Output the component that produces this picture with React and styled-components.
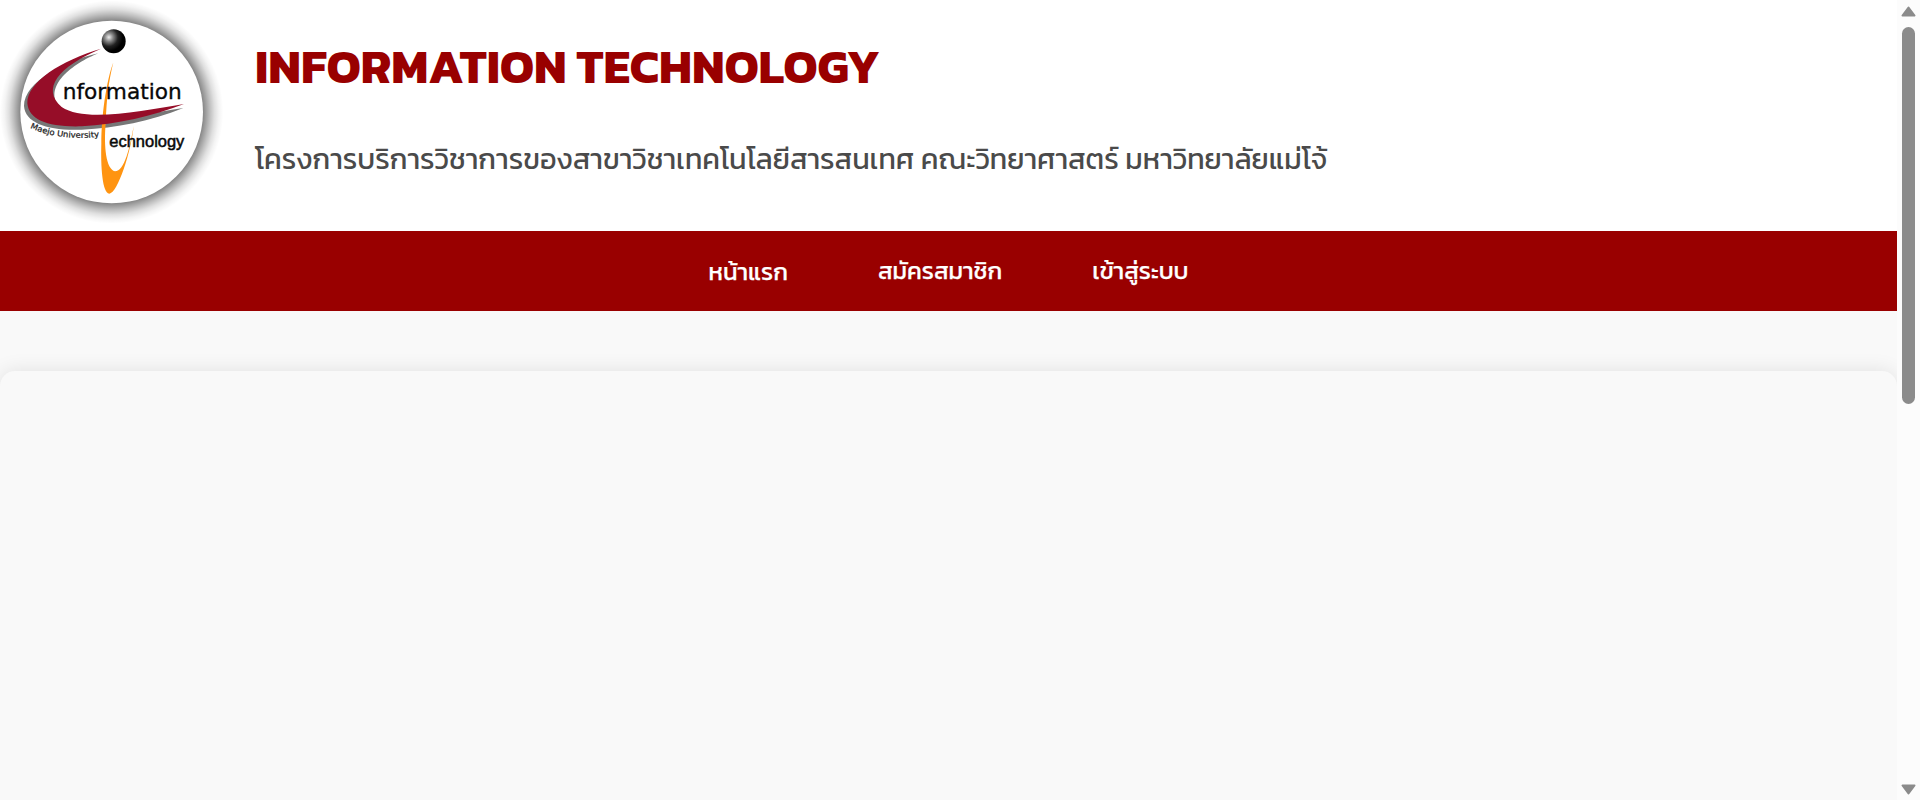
import React from "react";
import styled, { createGlobalStyle } from "styled-components";

const GlobalStyle = createGlobalStyle`
  * { box-sizing: border-box; }
  html, body { margin: 0; height: 800px; overflow: hidden; background: #fafafa; }
  body { font-family: Kanit, "Noto Sans Thai", "Noto Sans", "Liberation Sans", sans-serif; }
`;

const Window = styled.div`
  display: grid;
  grid-template-columns: 1fr 23px;
  height: 800px;
`;

const Page = styled.div`
  display: flex;
  flex-direction: column;
  min-width: 0;
  overflow: hidden;
  background: #f9f9f9;
`;

const Header = styled.header`
  display: flex;
  height: 231px;
  flex: none;
  background: #fff;
`;

const Logo = styled.svg`
  display: block;
  width: 230px;
  height: 231px;
  flex: none;
`;

const Heading = styled.div`
  padding: 35px 0 0 25px;
  white-space: nowrap;
`;

const Title = styled.h1`
  margin: 0;
  height: 62px;
  font: 700 48px/62px Kanit, Inter, sans-serif;
  color: #900;
`;

const Subtitle = styled.p`
  margin: 32px 0 0;
  height: 60px;
  font-size: 28.8px;
  line-height: 60px;
  color: #4a4a4a;
`;

const Nav = styled.nav`
  display: flex;
  justify-content: center;
  align-items: center;
  gap: 90px;
  height: 80px;
  flex: none;
  background: #900;
`;

const NavLink = styled.a`
  padding-top: ${(p) => (p.$current ? 2 : 0)}px;
  color: #fff;
  font-size: 24px;
  font-weight: 400;
  line-height: 40px;
  white-space: nowrap;
  -webkit-text-stroke: 0.25px #fff;
`;

const Content = styled.main`
  flex: 1;
  margin-top: 60px;
  border-radius: 15px 15px 0 0;
  background: #f9f9f9;
  box-shadow: 0 0 20px rgba(0, 0, 0, 0.1);
`;

const Scrollbar = styled.div`
  display: flex;
  flex-direction: column;
  align-items: center;
  justify-content: space-between;
  padding: 6px 0 5px;
  background: #fcfcfc;
`;

const ScrollTop = styled.div`
  display: flex;
  flex-direction: column;
  align-items: center;
  gap: 10px;
`;

const Arrow = styled.svg`
  display: block;
  width: 15px;
  height: 11px;
  transform: ${(p) => (p.$down ? "rotate(180deg)" : "none")};
`;

const Thumb = styled.div`
  width: 13px;
  height: 377px;
  border-radius: 7px;
  background: #8b8b8b;
`;

const ScrollArrow = ({ down }) => (
  <Arrow $down={down} viewBox="0 0 15 11">
    <path d="M7.5 1.5 L13.5 9.5 H1.5Z" fill="#8b8b8b" stroke="#8b8b8b" strokeWidth="2" strokeLinejoin="round" />
  </Arrow>
);

const Emblem = () => (
  <Logo viewBox="0 0 690 693">
    <defs>
      <radialGradient id="halo" gradientUnits="userSpaceOnUse" cx="335" cy="336" r="335">
        <stop offset=".81" stopColor="#000" stopOpacity=".5" />
        <stop offset=".84" stopColor="#000" stopOpacity=".39" />
        <stop offset=".88" stopColor="#000" stopOpacity=".25" />
        <stop offset=".92" stopColor="#000" stopOpacity=".125" />
        <stop offset=".96" stopColor="#000" stopOpacity=".045" />
        <stop offset="1" stopColor="#000" stopOpacity="0" />
      </radialGradient>
      <radialGradient id="ball" cx=".3" cy=".33" r=".58">
        <stop offset="0" stopColor="#eee" />
        <stop offset=".3" stopColor="#888" />
        <stop offset=".65" stopColor="#222" />
        <stop offset="1" stopColor="#000" />
      </radialGradient>
      <path id="arc" d="M90 384 Q180 424 302 410" />
    </defs>
    <circle cx="335" cy="336" r="335" fill="url(#halo)" />
    <circle cx="335" cy="336" r="274" fill="#fff" />
    <circle cx="341" cy="124" r="36" fill="url(#ball)" />
    <path d="M295 160 C200 180 72 245 72 318 C76 370 145 393 245 389 C350 384 450 364 550 324 C390 350 235 375 180 325 C125 260 220 190 295 160Z" fill="#777" />
    <path d="M340 187 C319 242 304 350 304 430 C302 500 307 580 328 581 C353 580 394 452 401 378 C390 440 374 514 345 514 C318 508 311 440 317 370 C320 290 326 245 340 187Z" fill="#ff9411" />
    <path d="M303 146 C185 181 81 245 82 310 C86 360 145 382 245 379 C350 373 460 348 552 312 C430 331 255 369 185 321 C123 266 174 200 303 146Z" fill="#960d28" />
    <text x="188" y="298" fontFamily="DejaVu Sans" fontSize="62" textLength="357" lengthAdjust="spacingAndGlyphs" fill="#080808" stroke="#080808" strokeWidth="1">nformation</text>
    <text x="328" y="441" fontFamily="Liberation Sans" fontSize="48" textLength="225" lengthAdjust="spacingAndGlyphs" fill="#080808" stroke="#080808" strokeWidth="1.5">echnology</text>
    <text fontFamily="DejaVu Sans" fontSize="24" fill="#222" stroke="#222" strokeWidth=".7">
      <textPath href="#arc" textLength="212" lengthAdjust="spacingAndGlyphs">Maejo University</textPath>
    </text>
  </Logo>
);

export default function App() {
  return (
    <>
      <GlobalStyle />
      <Window>
        <Page>
          <Header>
            <Emblem />
            <Heading>
              <Title>INFORMATION TECHNOLOGY</Title>
              <Subtitle>โครงการบริการวิชาการของสาขาวิชาเทคโนโลยีสารสนเทศ คณะวิทยาศาสตร์ มหาวิทยาลัยแม่โจ้</Subtitle>
            </Heading>
          </Header>
          <Nav>
            <NavLink $current>หน้าแรก</NavLink>
            <NavLink>สมัครสมาชิก</NavLink>
            <NavLink>เข้าสู่ระบบ</NavLink>
          </Nav>
          <Content />
        </Page>
        <Scrollbar>
          <ScrollTop>
            <ScrollArrow />
            <Thumb />
          </ScrollTop>
          <ScrollArrow down />
        </Scrollbar>
      </Window>
    </>
  );
}
